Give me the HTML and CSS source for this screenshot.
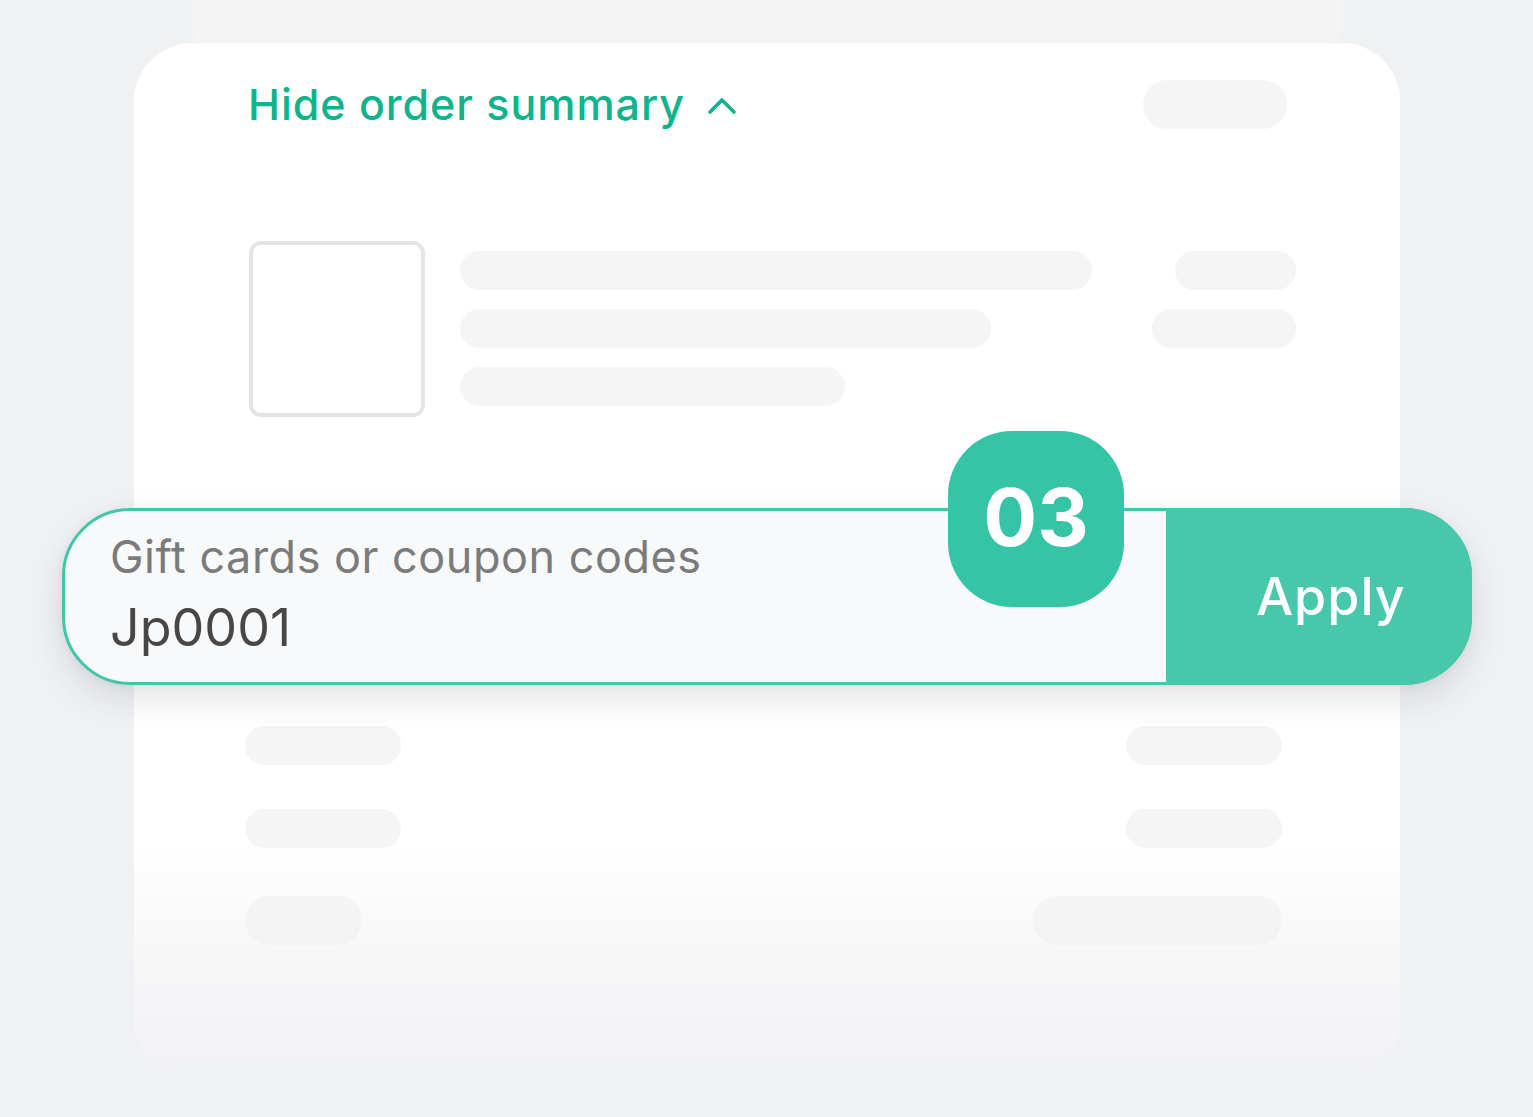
FILE: index.html
```html
<!DOCTYPE html>
<html lang="en">
<head>
<meta charset="utf-8">
<title>Order summary</title>
<link rel="stylesheet" href="styles.css">
</head>
<body>
<div class="stage">
  <div class="back-card"></div>
  <div class="card">
    <div class="header">
      <div class="toggle">
        <span class="toggle-text">Hide order summary</span>
        <svg class="chev" width="30" height="20" viewBox="0 0 30 20"><path d="M3 16 L15 4 L27 16" fill="none" stroke="#11b38c" stroke-width="3.6" stroke-linecap="round" stroke-linejoin="round"/></svg>
      </div>
      <div class="pill pill-head"></div>
    </div>

    <div class="product">
      <div class="thumb"></div>
      <div class="lines">
        <div class="pill line" style="width:632px"></div>
        <div class="pill line" style="width:531px"></div>
        <div class="pill line" style="width:385px"></div>
      </div>
      <div class="prices">
        <div class="pill line" style="width:121px"></div>
        <div class="pill line" style="width:144px"></div>
      </div>
    </div>

    <div class="coupon">
      <div class="field">
        <span class="label">Gift cards or coupon codes</span>
        <span class="value">Jp0001</span>
      </div>
      <button class="apply">Apply</button>
      <div class="badge">03</div>
    </div>

    <div class="summary">
      <div class="row"><div class="pill sline" style="width:156px"></div><div class="pill sline" style="width:156px"></div></div>
      <div class="row"><div class="pill sline" style="width:156px"></div><div class="pill sline" style="width:156px"></div></div>
      <div class="row row-total"><div class="pill tline" style="width:117px"></div><div class="pill tline" style="width:249px"></div></div>
    </div>
  </div>
</div>
</body>
</html>
```

FILE: styles.css
```css
* { box-sizing: border-box; }
html, body { margin: 0; padding: 0; }
body {
  background: #f0f1f3;
  font-family: Inter, "Liberation Sans", sans-serif;
  width: 1533px;
  height: 1117px;
  overflow: hidden;
}
.stage {
  position: relative;
  width: 1533px;
  height: 1117px;
}
.back-card {
  margin-left: 193px;
  width: 1147px;
  height: 43px;
  background: #f4f4f5;
  border-radius: 0 0 8px 8px;
}
.card {
  position: relative;
  margin-left: 134px;
  width: 1266px;
  height: 1034px;
  background: #ffffff;
  border-radius: 58px;
  padding: 37px 113px 0 114px;
}
.card::after {
  content: "";
  position: absolute;
  left: 0;
  right: 0;
  bottom: 0;
  height: 230px;
  border-radius: 0 0 58px 58px;
  background: linear-gradient(to bottom, rgba(240,241,243,0) 0%, rgba(240,241,243,0.55) 45%, rgba(240,241,243,0.97) 100%);
  pointer-events: none;
}
.header {
  display: flex;
  justify-content: space-between;
  align-items: center;
  height: 49px;
}
.toggle {
  display: flex;
  align-items: center;
  gap: 22px;
}
.toggle-text {
  font-family: Inter, "Liberation Sans", sans-serif;
  font-size: 43px;
  font-weight: 500;
  color: #11b38c;
  letter-spacing: 0.95px;
  line-height: 49px;
}
.chev { margin-top: 2px; }
.pill {
  background: #f5f5f5;
  border-radius: 999px;
}
.pill-head {
  width: 144px;
  height: 49px;
}
.product {
  display: flex;
  margin-top: 112px;
  margin-right: -9px;
}
.thumb {
  width: 176px;
  height: 176px;
  border: 4px solid #e4e4e6;
  border-radius: 12px;
  margin-left: 1px;
  flex: none;
}
.lines {
  margin-left: 35px;
  padding-top: 10px;
  display: flex;
  flex-direction: column;
  gap: 19px;
  flex: 1;
}
.prices {
  padding-top: 10px;
  display: flex;
  flex-direction: column;
  align-items: flex-end;
  gap: 19px;
}
.line { height: 39px; }
.coupon {
  position: relative;
  display: flex;
  margin-top: 91px;
  margin-left: -186px;
  width: 1410px;
  height: 177px;
  border: 3px solid #42c6a8;
  border-radius: 68px;
  background: #f8f9fa;
  box-shadow: 0 14px 34px rgba(40, 50, 60, 0.13), 0 2px 8px rgba(40, 50, 60, 0.05);
}
.field {
  flex: 1;
  display: flex;
  flex-direction: column;
  padding: 18px 0 0 45px;
  font-family: Inter, "Liberation Sans", sans-serif;
}
.label {
  font-size: 45px;
  color: #7b7b7b;
  letter-spacing: 0.5px;
  line-height: 56px;
}
.value {
  font-size: 52px;
  color: #474747;
  letter-spacing: 0;
  line-height: 70px;
  margin-top: 8px;
}
.apply {
  width: 306px;
  margin: -3px -3px -3px 0;
  border: none;
  border-radius: 0 68px 68px 0;
  background: #48c8ab;
  color: #ffffff;
  font-family: Inter, "Liberation Sans", sans-serif;
  font-size: 52px;
  font-weight: 500;
  letter-spacing: 1px;
  padding: 0 0 0 24px;
  cursor: pointer;
}
.badge {
  position: absolute;
  left: 883px;
  top: -80px;
  width: 176px;
  height: 176px;
  border-radius: 64px;
  background: #36c4a7;
  color: #ffffff;
  font-family: Inter, "Liberation Sans", sans-serif;
  font-size: 80px;
  font-weight: 700;
  display: flex;
  align-items: center;
  justify-content: center;
  letter-spacing: 0;
  padding-bottom: 6px;
}
.summary {
  margin-top: 41px;
  margin-left: -3px;
  margin-right: 5px;
  display: flex;
  flex-direction: column;
}
.row {
  display: flex;
  justify-content: space-between;
}
.row + .row { margin-top: 44px; }
.row-total { margin-top: 48px !important; }
.sline { height: 39px; }
.tline { height: 49px; }
```
